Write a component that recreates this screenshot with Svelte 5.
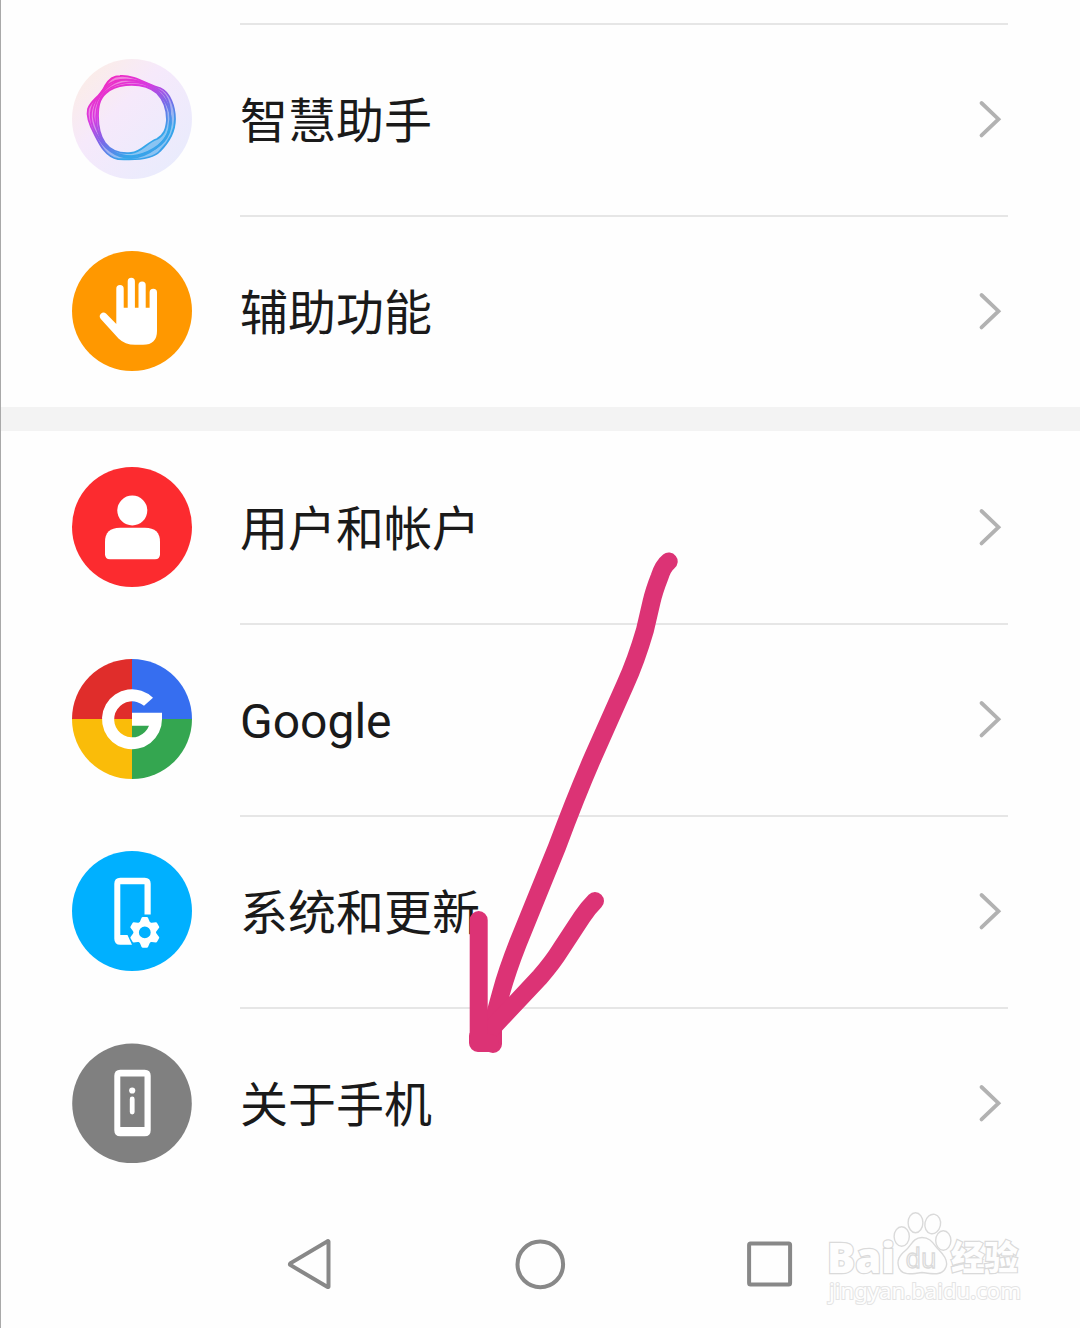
<script>
  const groups = [
    [
      { icon: 'assistant', label: '智慧助手' },
      { icon: 'accessibility', label: '辅助功能' },
    ],
    [
      { icon: 'users', label: '用户和帐户' },
      { icon: 'google', label: 'Google' },
      { icon: 'system', label: '系统和更新' },
      { icon: 'about', label: '关于手机' },
    ],
  ];
  const gearTeeth = [0, 60, 120, 180, 240, 300];
</script>

<main class="screen">
  {#each groups as group, g}
    <section class="group" class:continued={g === 0}>
      {#each group as item}
        <div class="row">
          <svg class="icon" viewBox="0 0 120 120" aria-hidden="true">
            {#if item.icon === 'assistant'}
              <defs>
                <linearGradient id="halo" x1="0" y1="0" x2="1" y2="1">
                  <stop offset="0" stop-color="#fdeee0" />
                  <stop offset="0.4" stop-color="#f6e9fb" />
                  <stop offset="1" stop-color="#e6ecfd" />
                </linearGradient>
                <linearGradient id="ring" gradientUnits="userSpaceOnUse" x1="35" y1="22" x2="82" y2="96">
                  <stop offset="0" stop-color="#ee2cc4" />
                  <stop offset="0.28" stop-color="#d93ae0" />
                  <stop offset="0.55" stop-color="#7b66e8" />
                  <stop offset="0.85" stop-color="#35a6ea" />
                  <stop offset="1" stop-color="#3aa0ea" />
                </linearGradient>
              </defs>
              <circle cx="60" cy="60" r="60" fill="url(#halo)" />
              <g fill="none" stroke="url(#ring)">
                <path fill="url(#ring)" fill-opacity="0.55" fill-rule="evenodd" stroke-width="1.8" d="M48 17C63 16 76 26 88 29C98 33 103 48 103 60C103 72 97 83 88 92C80 101 60 101 46 100C34 98 28 86 23 76C18 67 14 58 16 50C19 41 28 38 33 27C37 20 42 17 48 17ZM54 26C66 25 77 27 85 34C92 41 95 52 95 61C94 71 92 76 85 80C74 84 70 93 59 94C48 95 39 92 33 84C27 76 26 67 26 57C26 48 27 40 34 34C39 29 46 27 54 26Z" />
                <path stroke-width="1.8" d="M43 22C60 18 78 24 90 33C100 42 99 60 97 70C94 84 77 98 59 99C43 99 31 88 25 76C17 63 17 52 23 42C30 34 32 26 43 22Z" />
                <path stroke-width="1.6" d="M50 21C66 19 83 29 90 38C98 48 102 62 96 74C90 87 75 95 60 97C45 97 34 90 28 77C20 60 20 54 25 42C31 31 38 24 50 21Z" />
                <path stroke-width="1.6" d="M33 33C46 21 68 20 83 30C95 38 99 53 99 64C98 80 88 89 74 94C58 101 41 98 31 84C22 69 21 46 33 33Z" />
              </g>
            {:else if item.icon === 'accessibility'}
              <circle cx="60" cy="60" r="60" fill="#ff9800" />
              <path fill="#fff" d="M44.3 73V37.7a3.7 3.7 0 0 1 7.4 0V56.7H55.7V30.4a3.6 3.6 0 0 1 7.2 0V56.7H66.5V34a3.6 3.6 0 0 1 7.2 0V56.7H77.6V41.4a3.6 3.6 0 0 1 7.4 0V80Q85 93.8 71 93.8H63Q53 93.8 46.5 87.5L28.8 68A3.8 3.8 0 0 1 34 62.5Z" />
            {:else if item.icon === 'users'}
              <circle cx="60" cy="60" r="60" fill="#fc2b2f" />
              <circle cx="60.3" cy="43.5" r="15" fill="#fff" />
              <path fill="#fff" d="M33 75Q33 60.8 48 60.8H73Q88 60.8 88 75V87.3Q88 92.3 83 92.3H38Q33 92.3 33 87.3Z" />
            {:else if item.icon === 'google'}
              <path fill="#e02d2b" d="M60 60V0A60 60 0 0 0 0 60Z" />
              <path fill="#366ef0" d="M60 60H120A60 60 0 0 0 60 0Z" />
              <path fill="#fabc09" d="M60 60H0A60 60 0 0 0 60 120Z" />
              <path fill="#34a650" d="M60 60V120A60 60 0 0 0 120 60Z" />
              <path fill="#fff" d="M81 38.8A30 30 0 1 0 90 60V53.7H60V66.7H77A18 18 0 1 1 72 46.8Z" />
            {:else if item.icon === 'system'}
              <circle cx="60" cy="60" r="60" fill="#00b0ff" />
              <path fill="#fff" d="M48.3 26.7H72.7Q78.7 26.7 78.7 32.7V63.5H72.5V33.3H48.3V84H55.5L60 93.7H48.3Q42.3 93.7 42.3 87.7V32.7Q42.3 26.7 48.3 26.7Z" />
              <g transform="translate(72.8 81.4)">
                <circle r="14" fill="#00b0ff" />
                {#each gearTeeth as angle}
                  <path fill="#fff" transform="rotate({angle})" d="M-5.6 -9L-3.2 -14.6Q-2.9 -15.3 -2 -15.3H2Q2.9 -15.3 3.2 -14.6L5.6 -9Z" />
                {/each}
                <circle r="8.6" fill="none" stroke="#fff" stroke-width="5.4" />
              </g>
            {:else}
              <circle cx="60" cy="60.4" r="59.8" fill="#808080" />
              <path fill="#fff" fill-rule="evenodd" d="M48.3 26.8H72.7Q78.7 26.8 78.7 32.8V87.3Q78.7 93.3 72.7 93.3H48.3Q42.3 93.3 42.3 87.3V32.8Q42.3 26.8 48.3 26.8ZM48.3 33.5V84H72.5V33.5Z" />
              <circle cx="60.2" cy="47.5" r="3.1" fill="#fff" />
              <path stroke="#fff" stroke-width="4.8" stroke-linecap="round" d="M60.2 56V69" />
            {/if}
          </svg>
          <div class="content">
            <span class="label">{item.label}</span>
            <svg class="chevron" viewBox="0 0 24 40" aria-hidden="true">
              <path d="M3.500 4L20.5 20.200L3.500 36.400" />
            </svg>
          </div>
        </div>
      {/each}
    </section>
  {/each}

  <nav class="navbar">
    <svg viewBox="0 0 52 52" aria-hidden="true"><path d="M44.5 3.6V48.4Q44.5 49.4 43.500 49L6.3 27Q5.4 26.2 6.3 25.4L43.500 3.2Q44.5 2.8 44.5 3.6Z" /></svg>
    <svg viewBox="0 0 52 52" aria-hidden="true"><circle cx="26.3" cy="26.4" r="22.8" /></svg>
    <svg viewBox="0 0 52 52" aria-hidden="true"><rect x="5.1" y="5.600" width="41" height="41" rx="1.5" /></svg>
  </nav>

  <svg class="arrow" viewBox="0 0 220 510" aria-hidden="true">
    <path d="M208.7 21.5Q203 26 199.500 37Q194 51 191.5 62L185 90Q176 121 165 145L133 217Q116 256 97 307L58 403Q47 431 41 453L33 482V504" />
    <path d="M135 361Q128 368 122 377L101 409Q93 422 80 437L33 487" />
    <path d="M18.7 380V503H30M18 496V503" />
  </svg>

  <svg class="watermark" viewBox="0 0 210 100" aria-hidden="true">
    <text class="latin" x="9" y="72.5" font-size="43" textLength="68" lengthAdjust="spacingAndGlyphs">Bai</text>
    <g class="paw">
      <ellipse cx="83.7" cy="36.5" rx="7.6" ry="9.7" />
      <ellipse cx="97.5" cy="22.7" rx="7.4" ry="10" />
      <ellipse cx="114.7" cy="24" rx="7.8" ry="9.8" transform="rotate(12 114.7 24)" />
      <ellipse cx="125.3" cy="40.5" rx="7.6" ry="9.8" />
      <path d="M104 37.5C114 37.5 116 46 121 50C127 56 130 62 128 67C125 75 118 74.5 104 72.5C92 74.5 84 75 81 68C78 60 82 55 88 50C93 46 95 37.5 104 37.500Z" />
    </g>
    <text class="du" x="87.5" y="67.5" font-size="27" textLength="31" lengthAdjust="spacingAndGlyphs">du</text>
    <text class="han" x="133" y="70" font-size="34" textLength="67" lengthAdjust="spacingAndGlyphs">经验</text>
    <text class="url" x="11" y="98.5" font-size="22" textLength="192" lengthAdjust="spacingAndGlyphs">jingyan.baidu.com</text>
  </svg>
</main>

<style>
  :global(body) {
    margin: 0;
    background: #fefefe;
  }

  .screen {
    position: relative;
    box-sizing: border-box;
    width: 1080px;
    height: 1328px;
    padding-top: 23px;
    overflow: hidden;
    background: #fefefe;
    border-left: 1px solid #a9a9a9;
    font-family: Roboto, 'Noto Sans CJK SC', sans-serif;
  }

  .group + .group {
    border-top: 24px solid #f3f3f3;
  }

  .row {
    display: flex;
    align-items: center;
    gap: 48px;
    height: 192px;
    padding: 0 72px 0 71px;
  }

  .icon {
    flex: none;
    width: 120px;
    height: 120px;
  }

  .content {
    flex: 1;
    align-self: stretch;
    display: flex;
    align-items: center;
    justify-content: space-between;
    padding-right: 6px;
  }

  .row + .row .content,
  .continued .content {
    box-shadow: inset 0 2px #e6e6e6;
  }

  .label {
    padding-top: 6px;
    font-size: 48px;
    line-height: 72px;
    color: #1a1a1a;
  }

  .chevron {
    width: 24px;
    height: 40px;
    fill: none;
    stroke: #b2b2b2;
    stroke-width: 3.8;
    stroke-linecap: round;
    stroke-linejoin: miter;
  }

  .navbar {
    display: flex;
    justify-content: center;
    gap: 178px;
    padding: 39px 2px 0 0;
  }

  .navbar svg {
    width: 52px;
    height: 52px;
    fill: none;
    stroke: #888;
    stroke-width: 4;
  }

  .arrow {
    position: absolute;
    left: 459px;
    top: 540px;
    width: 220px;
    height: 510px;
    overflow: visible;
    fill: none;
    stroke: #dc3375;
    stroke-width: 18;
    stroke-linecap: round;
    stroke-linejoin: round;
  }

  .watermark {
    position: absolute;
    left: 817px;
    top: 1200px;
    width: 210px;
    height: 100px;
    overflow: visible;
    fill: #fefefe;
    stroke: #dadada;
    stroke-width: 1.4;
  }

  .latin {
    font-family: 'Open Sans', sans-serif;
    font-weight: 800;
    stroke-width: 2.4;
    paint-order: stroke;
  }

  .du {
    font-family: 'Open Sans', sans-serif;
    font-weight: 400;
  }

  .han {
    font-weight: 900;
    stroke-width: 2.4;
    paint-order: stroke;
  }

  .url {
    font-family: 'Noto Sans', sans-serif;
    stroke: #e4e4e4;
    stroke-width: 2;
    paint-order: stroke;
  }
</style>
